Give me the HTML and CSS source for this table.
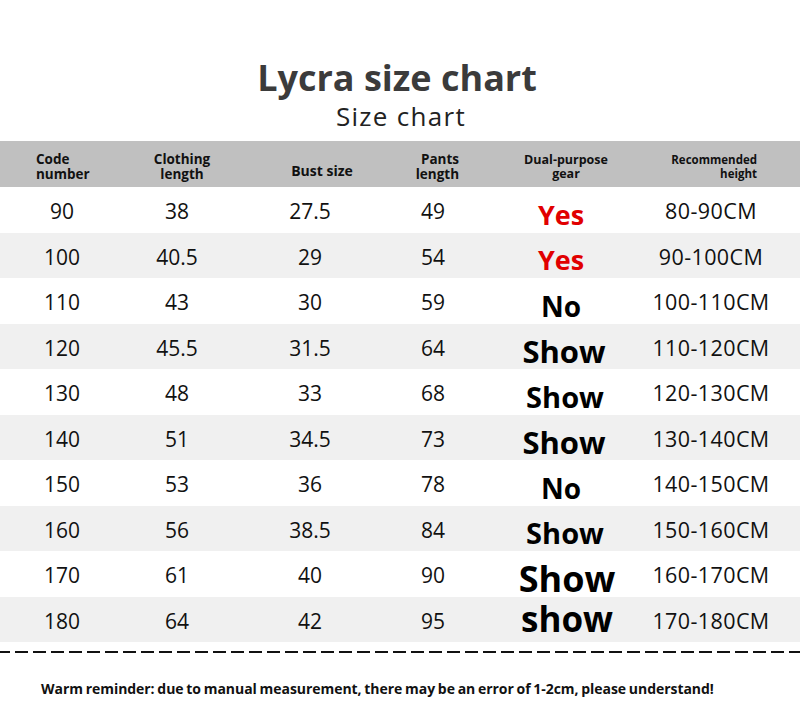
FILE: index.html
```html
<!DOCTYPE html>
<html>
<head>
<meta charset="utf-8">
<link rel="stylesheet" href="styles.css">
</head>
<body>
<div class="page">
  <header class="titles">
    <h1 class="title">Lycra size chart</h1>
    <div class="subtitle">Size chart</div>
  </header>
  <div class="table">
    <div class="row head">
      <div class="h h-code">Code<br>number</div>
      <div class="h h-cloth">Clothing<br>length</div>
      <div class="h h-bust">Bust size</div>
      <div class="h h-pants">Pants<br>length</div>
      <div class="h h-dual">Dual-purpose<br>gear</div>
      <div class="h h-rec">Recommended<br>height</div>
    </div>
    <div class="row"><div class="c">90</div><div class="c">38</div><div class="c">27.5</div><div class="c">49</div><div class="c d yes">Yes</div><div class="c r">80-90CM</div></div>
    <div class="row alt"><div class="c">100</div><div class="c">40.5</div><div class="c">29</div><div class="c">54</div><div class="c d yes">Yes</div><div class="c r">90-100CM</div></div>
    <div class="row"><div class="c">110</div><div class="c">43</div><div class="c">30</div><div class="c">59</div><div class="c d no">No</div><div class="c r">100-110CM</div></div>
    <div class="row alt"><div class="c">120</div><div class="c">45.5</div><div class="c">31.5</div><div class="c">64</div><div class="c d show">Show</div><div class="c r">110-120CM</div></div>
    <div class="row"><div class="c">130</div><div class="c">48</div><div class="c">33</div><div class="c">68</div><div class="c d show s2">Show</div><div class="c r">120-130CM</div></div>
    <div class="row alt"><div class="c">140</div><div class="c">51</div><div class="c">34.5</div><div class="c">73</div><div class="c d show">Show</div><div class="c r">130-140CM</div></div>
    <div class="row"><div class="c">150</div><div class="c">53</div><div class="c">36</div><div class="c">78</div><div class="c d no">No</div><div class="c r">140-150CM</div></div>
    <div class="row alt"><div class="c">160</div><div class="c">56</div><div class="c">38.5</div><div class="c">84</div><div class="c d show s2">Show</div><div class="c r">150-160CM</div></div>
    <div class="row"><div class="c">170</div><div class="c">61</div><div class="c">40</div><div class="c">90</div><div class="c d show big">Show</div><div class="c r">160-170CM</div></div>
    <div class="row alt"><div class="c">180</div><div class="c">64</div><div class="c">42</div><div class="c">95</div><div class="c d show big up">show</div><div class="c r">170-180CM</div></div>
  </div>
  <div class="dash"></div>
  <p class="note">Warm reminder: due to manual measurement, there may be an error of 1-2cm, please understand!</p>
</div>
</body>
</html>
```

FILE: styles.css
```css
html, body {
  margin: 0;
  padding: 0;
  background: #ffffff;
}
.page {
  width: 800px;
  height: 705px;
  overflow: hidden;
  font-family: "Open Sans", "DejaVu Sans", sans-serif;
  color: #111;
}
.titles {
  padding-top: 56px;
  height: 141px;
  box-sizing: border-box;
  text-align: center;
}
.title {
  margin: 0;
  font-size: 36px;
  line-height: 44px;
  font-weight: 700;
  color: #3b3b3b;
  padding-right: 6px;
}
.subtitle {
  font-size: 26px;
  line-height: 30px;
  letter-spacing: 1.3px;
  color: #222;
  margin-top: 1px;
  padding-left: 2px;
}
.table {
  display: flex;
  flex-direction: column;
}
.row {
  display: grid;
  grid-template-columns: 124px 106px 160px 86px 170px 128px;
  height: 45.5px;
  align-items: center;
}
.row.alt {
  background: #f0f0f0;
}
.row.head {
  background: #c0c0c0;
  height: 46px;
}
.h {
  font-size: 13.5px;
  font-weight: 700;
  line-height: 15px;
  color: #111;
  padding-top: 5px;
}
.h-code { text-align: left; padding-left: 36px; }
.h-cloth { text-align: center; padding-left: 10px; }
.h-bust { text-align: center; padding-left: 24px; padding-top: 12px; font-size: 14px; }
.h-pants { text-align: right; padding-right: 17px; }
.h-dual { text-align: center; font-size: 12.5px; line-height: 14px; padding-left: 10px; }
.h-rec { text-align: right; font-size: 11.5px; line-height: 14px; padding-right: 17px; white-space: nowrap; }
.c {
  text-align: center;
  font-size: 21px;
  line-height: 26px;
  color: #111;
  padding-top: 3px;
}
.c.r { padding-left: 2px; font-size: 21.5px; letter-spacing: 0.4px; }
.d {
  font-weight: 700;
  color: #000;
  padding-top: 10px;
  line-height: 30px;
}
.yes { color: #e10000; font-size: 27px; }
.no { font-size: 28px; }
.show { font-size: 31px; padding-left: 6px; }
.show.s2 { font-size: 29px; padding-left: 8px; }
.show.big { font-size: 36px; padding-top: 10px; padding-left: 12px; }
.show.big.up { padding-top: 0; font-size: 35px; }
.dash {
  margin-top: 9px;
  height: 1.5px;
  background: repeating-linear-gradient(90deg, #111 0 13px, transparent 13px 18px);
  background-position: -3px 0;
}
.note {
  margin: 26px 0 0 41px;
  font-size: 14px;
  font-weight: 700;
  color: #111;
  letter-spacing: -0.05px;
  word-spacing: -0.8px;
}
```
